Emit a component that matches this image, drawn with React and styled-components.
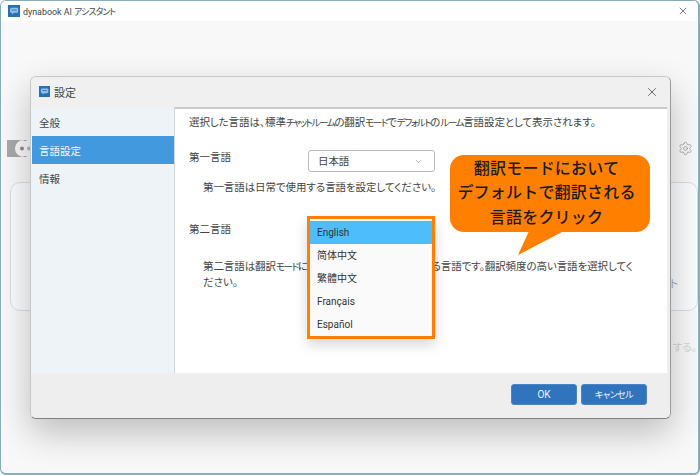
import React from 'react';
import styled, { createGlobalStyle } from 'styled-components';
import { X, ChevronDown, Settings } from 'lucide-react';

const GlobalStyle = createGlobalStyle`
  html, body {
    margin: 0;
    padding: 0;
    width: 700px;
    height: 475px;
    overflow: hidden;
    background: #ffffff;
  }
  * {
    box-sizing: border-box;
  }
`;

const FONT = `Roboto, "Noto Sans CJK JP", sans-serif`;

const AppWindow = styled.div`
  position: relative;
  width: 700px;
  height: 475px;
  display: flex;
  flex-direction: column;
  border: 1px solid #86aeb9;
  border-width: 1px 2px 2px 1px;
  border-radius: 6px;
  overflow: hidden;
  background: #f8f8f8;
  font-family: ${FONT};
  font-feature-settings: 'palt';
  color: #444;
`;

const AppTitleBar = styled.div`
  height: 20px;
  flex: none;
  display: flex;
  align-items: center;
  justify-content: space-between;
  padding: 0 9px 0 7px;
  background: #ffffff;
  font-size: 8.9px;
  color: #444;
`;

const TitleGroup = styled.div`
  display: flex;
  align-items: center;
  gap: ${(p) => p.$gap || 3}px;
`;

// katakana runs are set narrow in the original UI font
const Kana = styled.span`
  font-size: ${(p) => p.$size || 0.92}em;
  letter-spacing: ${(p) => p.$tight || -1.5}px;
`;

const AppBody = styled.div`
  flex: 1;
  display: flex;
  flex-direction: column;
  padding: 116px 0 0 0;
`;

const ToolRow = styled.div`
  display: flex;
  align-items: center;
  justify-content: space-between;
  height: 22px;
  padding: 0 5px 0 6px;
  margin-bottom: 23px;
`;

const BackCard = styled.div`
  height: 129px;
  margin-left: 9px;
  border: 1px solid #dcdcdc;
  border-radius: 10px;
  background: #fafbfc;
  display: flex;
  justify-content: flex-end;
  align-items: flex-end;
  padding: 0 19px 19px 0;
  font-size: 11px;
  color: #aaa;
`;

const BackHint = styled.div`
  margin-top: 28px;
  padding-right: 1px;
  text-align: right;
  font-size: 10.5px;
  color: #d4d4d4;
`;

const Dialog = styled.div`
  position: absolute;
  left: 29px;
  top: 75px;
  width: 641px;
  height: 343px;
  display: flex;
  flex-direction: column;
  border: 1px solid #c8c8c8;
  border-right-color: #9a9a9a;
  border-bottom-color: #808080;
  border-radius: 6px;
  overflow: hidden;
  background: #eeeeee;
  box-shadow: 0 14px 34px rgba(0, 0, 0, 0.24);
`;

const DialogHeader = styled.div`
  height: 30px;
  flex: none;
  display: flex;
  align-items: center;
  justify-content: space-between;
  padding: 0 11px 1px 8px;
  background: #f0f0f0;
  font-size: 11px;
  color: #444;
`;

const DialogMain = styled.div`
  flex: 1;
  display: flex;
  min-height: 0;
`;

const Sidebar = styled.nav`
  width: 144px;
  flex: none;
  padding-top: 1px;
  padding-left: 1px;
  background: #eef3f7;
  border-right: 1px solid #d6d6d6;
`;

const SideItem = styled.div`
  height: 28px;
  display: flex;
  align-items: center;
  padding-left: 7px;
  font-size: 10.5px;
  color: ${(p) => (p.$active ? '#f2f8fd' : '#444')};
  background: ${(p) => (p.$active ? '#4299dd' : 'transparent')};
`;

const Content = styled.section`
  flex: 1;
  position: relative;
  padding: 6px 14px 0 14px;
  background: #ffffff;
  border-top: 2px solid #c9c9c9;
  margin-right: 3px;
  font-size: 10.5px;
  line-height: 16px;
  letter-spacing: -0.08px;
`;

const Intro = styled.p`
  margin: 0 0 19px;
`;

const SettingRow = styled.div`
  display: flex;
  align-items: center;
  height: 22px;
  margin-top: ${(p) => p.$mt || 0}px;
`;

const RowLabel = styled.div`
  width: 119px;
  flex: none;
  letter-spacing: 0;
  position: relative;
  top: -3px;
`;

const SelectBox = styled.div`
  width: 127px;
  height: 22px;
  display: flex;
  align-items: center;
  justify-content: space-between;
  padding: 1px 11px 0 9px;
  border: 1px solid #bcbcbc;
  border-radius: 3px;
  background: #ffffff;
  color: #444;
`;

const Help = styled.p`
  margin: ${(p) => p.$mt || 0}px 0 0 14px;
`;

const LanguageMenu = styled.ul`
  position: absolute;
  left: 132px;
  top: 107px;
  width: 128px;
  height: 123px;
  margin: 0;
  padding: 2px 0 0;
  list-style: none;
  border: 3px solid #ff7f00;
  background: #fafafa;
  box-shadow: 0 6px 12px rgba(0, 0, 0, 0.16);
  letter-spacing: 0;
`;

const MenuItem = styled.li`
  height: 23px;
  display: flex;
  align-items: center;
  padding-left: 7px;
  font-size: 10px;
  color: #333;
  background: ${(p) => (p.$active ? '#4dbdfb' : 'transparent')};
`;

const Callout = styled.div`
  position: absolute;
  left: 275px;
  top: 46px;
  width: 200px;
  height: 77px;
  display: flex;
  flex-direction: column;
  align-items: center;
  justify-content: center;
  padding: 0 7px 0 0;
  border-radius: 14px;
  background: #ff7f00;
  color: #1c1c1c;
  font-size: 16px;
  font-weight: 500;
  font-feature-settings: normal;
  line-height: 24.5px;
  letter-spacing: 0.2px;
`;

const CalloutTail = styled.svg`
  position: absolute;
  left: 68px;
  top: 76px;
`;

const DialogFooter = styled.div`
  height: 45px;
  flex: none;
  display: flex;
  justify-content: flex-end;
  align-items: flex-start;
  gap: 4px;
  padding: 11px 23px 0 0;
  background: #eeeeee;
`;

const FooterButton = styled.button`
  width: 66px;
  height: 21px;
  padding: 0;
  border: 1px solid #4a86c5;
  border-radius: 3px;
  background: #2f74bd;
  color: #eef5fb;
  font-family: ${FONT};
  font-feature-settings: 'palt';
  font-size: 10px;
`;

const AppLogo = ({ size }) => (
  <svg width={size} height={size} viewBox="0 0 12 12">
    <rect width="12" height="12" fill="#2a6fb5" />
    <path
      d="M3.6 2.8h5a1.6 1.6 0 0 1 1.6 1.6v1.8a1.6 1.6 0 0 1-1.6 1.6H6L3.9 9.4V7.8h-.3A1.6 1.6 0 0 1 2 6.2V4.4a1.6 1.6 0 0 1 1.6-1.6z"
      fill="#8fc0e8"
    />
    <rect x="3.6" y="4.6" width="5" height="0.9" fill="#2a6fb5" />
  </svg>
);

const ChatMark = () => (
  <svg width="24" height="17" viewBox="0 0 24 17">
    <path d="M0 0h16.5a6 6 0 0 0 0 17H0z" fill="#a8a8a8" />
    <path d="M16.5 0h3v1h-3zM16.5 16h3v1h-3z" fill="#a8a8a8" />
    <circle cx="15" cy="8.5" r="2" fill="#8e8e8e" />
    <circle cx="22" cy="8.5" r="2" fill="#b8b8b8" />
  </svg>
);

const languages = ['English', '简体中文', '繁體中文', 'Français', 'Español'];

const App = () => {
  return (
    <AppWindow>
      <GlobalStyle />
      <AppTitleBar>
        <TitleGroup>
          <AppLogo size={12} />
          <span>
            dynabook AI <Kana $size={1} $tight={-0.9}>アシスタント</Kana>
          </span>
        </TitleGroup>
        <X size={12} strokeWidth={1.2} color="#333" />
      </AppTitleBar>
      <AppBody>
        <ToolRow>
          <ChatMark />
          <Settings size={15} strokeWidth={1} color="#8a8a8a" />
        </ToolRow>
        <BackCard>ト</BackCard>
        <BackHint>する。</BackHint>
      </AppBody>

      <Dialog>
        <DialogHeader>
          <TitleGroup $gap={4}>
            <AppLogo size={11} />
            設定
          </TitleGroup>
          <X size={14} strokeWidth={1.2} color="#333" />
        </DialogHeader>
        <DialogMain>
          <Sidebar>
            <SideItem>全般</SideItem>
            <SideItem $active>言語設定</SideItem>
            <SideItem>情報</SideItem>
          </Sidebar>
          <Content>
            <Intro>
              選択した言語は、標準<Kana>チャットルーム</Kana>の翻訳<Kana>モード</Kana>で<Kana>デフォルト</Kana>の<Kana>ルーム</Kana>言語設定として表示されます。
            </Intro>
            <SettingRow>
              <RowLabel>第一言語</RowLabel>
              <SelectBox>
                日本語
                <ChevronDown size={9} strokeWidth={1.2} color="#666" />
              </SelectBox>
            </SettingRow>
            <Help $mt={8}>第一言語は日常で使用する言語を設定してください。</Help>
            <SettingRow $mt={26}>
              <RowLabel>第二言語</RowLabel>
            </SettingRow>
            <Help $mt={15}>
              第二言語は翻訳<Kana>モード</Kana>においてデフォルトで翻訳される言語です。翻訳頻度の高い言語を選択してく
              <br />
              ださい。
            </Help>
            <LanguageMenu>
              {languages.map((name, i) => (
                <MenuItem key={name} $active={i === 0}>
                  {name}
                </MenuItem>
              ))}
            </LanguageMenu>
            <Callout>
              <span>翻訳モードにおいて</span>
              <span>デフォルトで翻訳される</span>
              <span>言語をクリック</span>
              <CalloutTail width="50" height="26" viewBox="0 0 50 26">
                <path d="M11 0 L0 24 L46 0 Z" fill="#ff7f00" />
              </CalloutTail>
            </Callout>
          </Content>
        </DialogMain>
        <DialogFooter>
          <FooterButton>OK</FooterButton>
          <FooterButton>
            <Kana $size={0.9} $tight={-0.5}>キャンセル</Kana>
          </FooterButton>
        </DialogFooter>
      </Dialog>
    </AppWindow>
  );
};

export default App;
